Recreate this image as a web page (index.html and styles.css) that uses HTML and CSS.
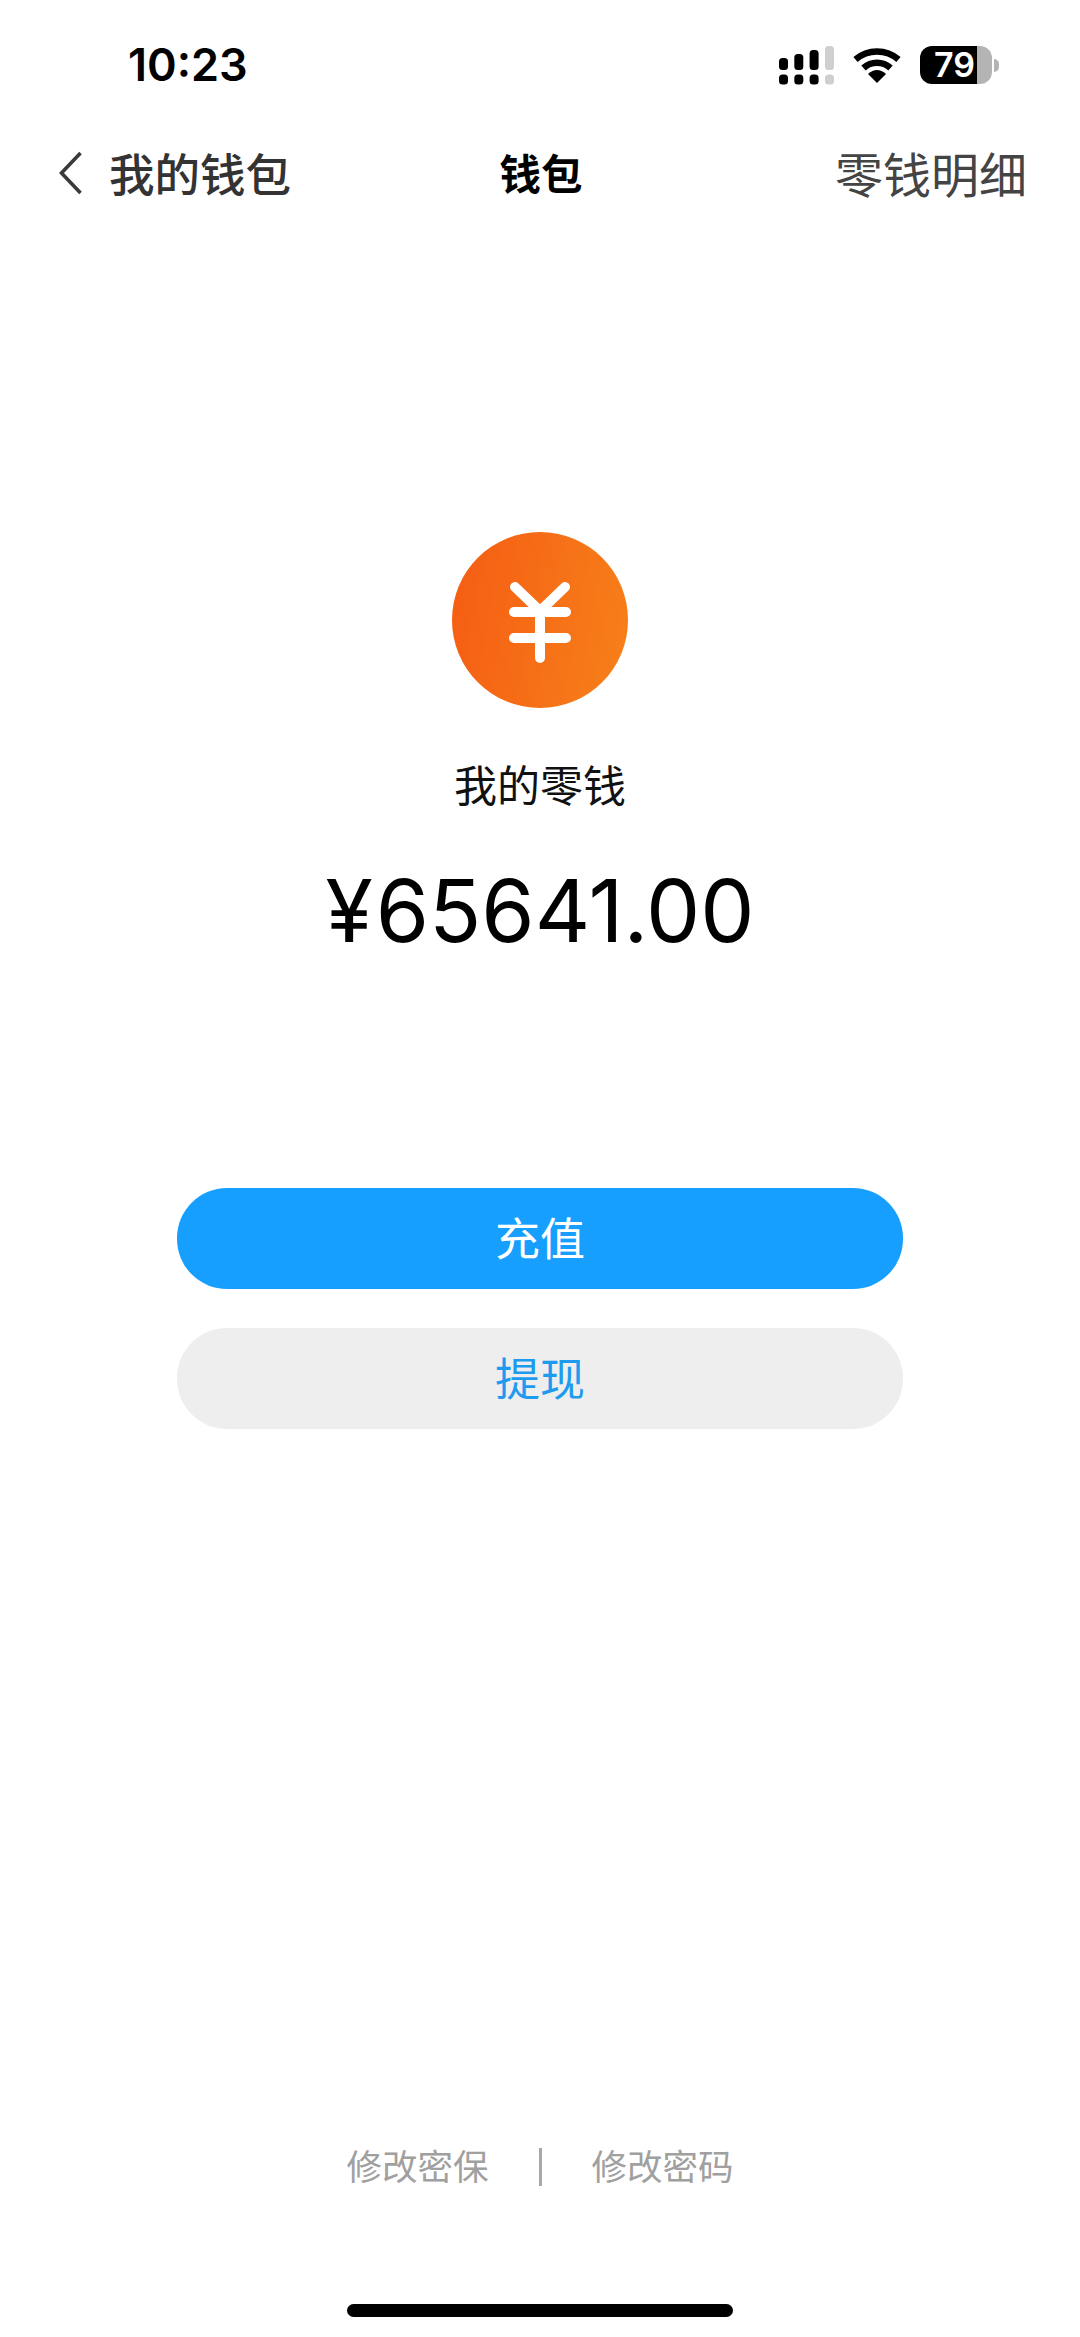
FILE: index.html
```html
<!DOCTYPE html>
<html lang="zh-CN">
<head>
<meta charset="utf-8">
<title>钱包</title>
<link rel="stylesheet" href="styles.css">
</head>
<body>
<div class="page">
  <header class="status">
    <span class="time">10:23</span>
    <div class="status-icons">
      <svg class="signal" width="55" height="39" viewBox="0 0 55 39">
        <g fill="#000">
          <rect x="0" y="12" width="9" height="12" rx="3.5"/>
          <rect x="15.3" y="8" width="9" height="16" rx="3.5"/>
          <rect x="30.6" y="4" width="9" height="20" rx="3.5"/>
          <rect x="0" y="28.5" width="9" height="10" rx="3.5"/>
          <rect x="15.3" y="28.5" width="9" height="10" rx="3.5"/>
          <rect x="30.6" y="28.5" width="9" height="10" rx="3.5"/>
        </g>
        <g fill="#cfcfcf">
          <rect x="46" y="0" width="9" height="24" rx="3.5"/>
          <rect x="46" y="28.5" width="9" height="10" rx="3.5"/>
        </g>
      </svg>
      <svg class="wifi" width="48" height="36" viewBox="0 0 48 36">
        <path d="M2.5 12.5A33 33 0 0 1 45.5 12.5" fill="none" stroke="#000" stroke-width="6.5"/>
        <path d="M10.5 21A20 20 0 0 1 37.5 21" fill="none" stroke="#000" stroke-width="6.5"/>
        <path d="M15 27Q24 19 33 27L24 36Z" fill="#000"/>
      </svg>
      <div class="battery-wrap">
        <div class="battery">79</div>
        <span class="battery-tip"></span>
      </div>
    </div>
  </header>

  <nav class="nav">
    <div class="nav-left">
      <svg class="back" width="23" height="44" viewBox="0 0 23 44">
        <path d="M21.5 2L2.5 22L21.5 42" fill="none" stroke="#3a3a3a" stroke-width="3.6"/>
      </svg>
      <span class="nav-back-label">我的钱包</span>
    </div>
    <span class="nav-title">钱包</span>
    <span class="nav-right">零钱明细</span>
  </nav>

  <main class="hero">
    <div class="coin">
      <svg width="176" height="176" viewBox="0 0 176 176">
        <path d="M63 55L88 79L113 55M62 80H114M62 106H114M88 79V126" fill="none" stroke="#fff" stroke-width="10" stroke-linecap="round" stroke-linejoin="round"/>
      </svg>
    </div>
    <p class="label">我的零钱</p>
    <p class="amount"><span class="currency">¥</span>65641.00</p>
    <div class="actions">
      <button class="btn btn-primary" type="button">充值</button>
      <button class="btn btn-secondary" type="button">提现</button>
    </div>
  </main>

  <footer class="footer">
    <div class="links">
      <span class="link">修改密保</span>
      <span class="divider"></span>
      <span class="link">修改密码</span>
    </div>
    <div class="home-bar"></div>
  </footer>
</div>
</body>
</html>
```
FILE: styles.css
```css
* { box-sizing: border-box; }
html, body { margin: 0; padding: 0; background: #fff; }
body { font-family: "Noto Sans CJK SC", "Noto Sans", sans-serif; }
.page { width: 1080px; height: 2337px; display: flex; flex-direction: column; overflow: hidden; }

.status { height: 130px; flex: none; display: flex; align-items: center; justify-content: space-between; padding: 0 81px 0 128px; }
.time { font-family: Inter, "Liberation Sans", sans-serif; font-weight: 600; font-size: 45px; line-height: 60px; color: #000; }
.status-icons { display: flex; align-items: center; gap: 19px; }
.signal, .wifi { display: block; }
.battery-wrap { display: flex; align-items: center; gap: 2px; }
.battery { width: 72px; height: 38px; border-radius: 12px; background: linear-gradient(90deg, #000 0 79%, #b4b4b4 79% 100%); color: #fff; font-family: Inter, "Liberation Sans", sans-serif; font-weight: 600; font-size: 34px; line-height: 38px; padding-left: 14px; }
.battery-tip { width: 5px; height: 13px; background: #b4b4b4; border-radius: 0 6px 6px 0; }

.nav { height: 90px; flex: none; display: grid; grid-template-columns: 1fr auto 1fr; align-items: center; padding: 0 53px 0 59px; }
.nav-left { display: flex; align-items: center; gap: 27px; }
.back { display: block; margin-top: -5px; }
.nav-back-label { font-size: 45.5px; line-height: 60px; font-weight: 500; color: #333; padding-bottom: 7px; }
.nav-title { font-size: 41.5px; line-height: 60px; font-weight: 700; color: #000; padding: 0 4px 7px 0; }
.nav-right { justify-self: end; font-size: 48px; line-height: 60px; font-weight: 400; color: #444; padding-bottom: 7px; }

.hero { flex: none; display: flex; flex-direction: column; align-items: center; padding-top: 312px; }
.coin { width: 176px; height: 176px; border-radius: 50%; background: linear-gradient(100deg, #f55c13 0%, #f7811a 100%); }
.coin svg { display: block; }
.label { margin: 45px 0 3px; font-size: 43px; line-height: 60px; color: #111; }
.amount { margin: 45px 0 0; font-family: Inter, "Liberation Sans", sans-serif; font-size: 86px; line-height: 100px; color: #000; font-weight: 400; }
.currency { margin-right: 3px; }
.actions { margin-top: 227px; width: 726px; display: flex; flex-direction: column; gap: 39px; }
.btn { display: block; width: 100%; height: 101px; border: 0; border-radius: 50px; font-family: inherit; font-size: 45px; font-weight: 400; padding: 0 0 4px; }
.btn-primary { background: #169fff; color: #fff; }
.btn-secondary { background: #eeeeee; color: #1e9bef; }

.footer { margin-top: auto; display: flex; flex-direction: column; align-items: center; padding-bottom: 20px; }
.links { display: flex; align-items: center; gap: 50px; height: 44px; }
.link { font-size: 35.5px; line-height: 44px; color: #a0a0a0; padding-bottom: 4px; }
.divider { width: 3px; height: 38px; background: #a8a8a8; }
.home-bar { margin-top: 115px; width: 386px; height: 13px; border-radius: 7px; background: #000; }
```
